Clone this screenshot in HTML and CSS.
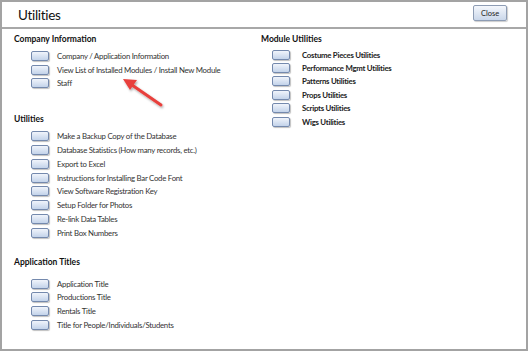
FILE: index.html
```html
<!DOCTYPE html>
<html>
<head>
<meta charset="utf-8">
<link rel="stylesheet" href="styles.css">
</head>
<body>
<div class="window">
  <div class="header">
    <div class="title">Utilities</div>
    <button class="close">Close</button>
  </div>
  <div class="content">
    <div class="col left">
      <div class="section company">
        <div class="sec-title">Company Information</div>
        <ul class="items">
          <li><span class="btn"></span>Company / Application Information</li>
          <li><span class="btn"></span>View List of Installed Modules / Install New Module</li>
          <li><span class="btn"></span>Staff</li>
        </ul>
      </div>
      <div class="section utils">
        <div class="sec-title">Utilities</div>
        <ul class="items">
          <li><span class="btn"></span>Make a Backup Copy of the Database</li>
          <li><span class="btn"></span>Database Statistics (How many records, etc.)</li>
          <li><span class="btn"></span>Export to Excel</li>
          <li><span class="btn"></span>Instructions for Installing Bar Code Font</li>
          <li><span class="btn"></span>View Software Registration Key</li>
          <li><span class="btn"></span>Setup Folder for Photos</li>
          <li><span class="btn"></span>Re-link Data Tables</li>
          <li><span class="btn"></span>Print Box Numbers</li>
        </ul>
      </div>
      <div class="section apps">
        <div class="sec-title">Application Titles</div>
        <ul class="items">
          <li><span class="btn"></span>Application Title</li>
          <li><span class="btn"></span>Productions Title</li>
          <li><span class="btn"></span>Rentals Title</li>
          <li><span class="btn"></span>Title for People/Individuals/Students</li>
        </ul>
      </div>
    </div>
    <div class="col right">
      <div class="section modules">
        <div class="sec-title">Module Utilities</div>
        <ul class="items bold">
          <li><span class="btn"></span>Costume Pieces Utilities</li>
          <li><span class="btn"></span>Performance Mgmt Utilities</li>
          <li><span class="btn"></span>Patterns Utilities</li>
          <li><span class="btn"></span>Props Utilities</li>
          <li><span class="btn"></span>Scripts Utilities</li>
          <li><span class="btn"></span>Wigs Utilities</li>
        </ul>
      </div>
    </div>
  </div>
  <svg class="arrow" width="60" height="45" viewBox="0 0 60 45">
    <defs>
      <filter id="sh" x="-20%" y="-20%" width="150%" height="150%">
        <feDropShadow dx="1" dy="1.5" stdDeviation="1" flood-color="#000" flood-opacity="0.35"/>
      </filter>
    </defs>
    <g filter="url(#sh)">
      <line x1="47" y1="37" x2="18" y2="17" stroke="#e8413c" stroke-width="3" stroke-linecap="round"/>
      <polygon points="9,11 23,12 16,22" fill="#e8413c"/>
    </g>
  </svg>
</div>
</body>
</html>
```

FILE: styles.css
```css
* { box-sizing: border-box; }
html, body { margin: 0; padding: 0; background: #ffffff; }
body { font-family: "Lato", "Open Sans", sans-serif; color: #222; }

.window {
  position: relative;
  width: 528px;
  height: 351px;
  border: 2px solid #a3a3a3;
  background: #fff;
}

.header {
  height: 27px;
  border-bottom: 2px solid #a8a8a8;
  display: flex;
  align-items: center;
  justify-content: space-between;
  padding: 0 19px 0 16px;
}
.title {
  font-size: 13.5px;
  letter-spacing: -0.3px;
  color: #111;
}
.close {
  width: 34px;
  height: 16px;
  margin-top: -3px;
  padding: 0;
  font-family: "Lato", sans-serif;
  font-size: 7.5px;
  color: #222;
  border: 1px solid #8d9cb4;
  border-radius: 2px;
  background: linear-gradient(#f4f7fc, #cad7ea);
  box-shadow: 1px 1px 1px rgba(0,0,0,0.2);
}

.content {
  display: grid;
  grid-template-columns: 247px 1fr;
  padding-left: 12px;
}

.sec-title {
  font-weight: bold;
  font-size: 8.5px;
  color: #111;
  height: 10px;
  line-height: 10px;
}

.items {
  list-style: none;
  margin: 0;
  padding: 0 0 0 17px;
}
.items li {
  display: flex;
  align-items: center;
  height: 13.8px;
  font-size: 7.8px;
  letter-spacing: -0.25px;
  color: #333;
  white-space: nowrap;
}
.items.bold li { font-weight: bold; color: #222; height: 13.4px; }

.btn {
  display: inline-block;
  width: 18px;
  height: 10px;
  margin-right: 8px;
  border: 1px solid #7489ad;
  border-radius: 2px;
  background: linear-gradient(#f0f4fb, #c3d3ea);
  box-shadow: 1px 1px 1px rgba(0,0,0,0.25);
  flex: none;
}

.company { margin-top: 5px; }
.company .items { margin-top: 5px; }
.utils { margin-top: 24px; }
.utils .items { margin-top: 5px; }
.apps { margin-top: 17px; }
.apps .items { margin-top: 10px; }

.right .items { padding-left: 11px; }
.right .btn { margin-right: 12px; }
.modules { margin-top: 5px; }
.modules .items { margin-top: 4px; }

.arrow {
  position: absolute;
  left: 112px;
  top: 66px;
}
```
